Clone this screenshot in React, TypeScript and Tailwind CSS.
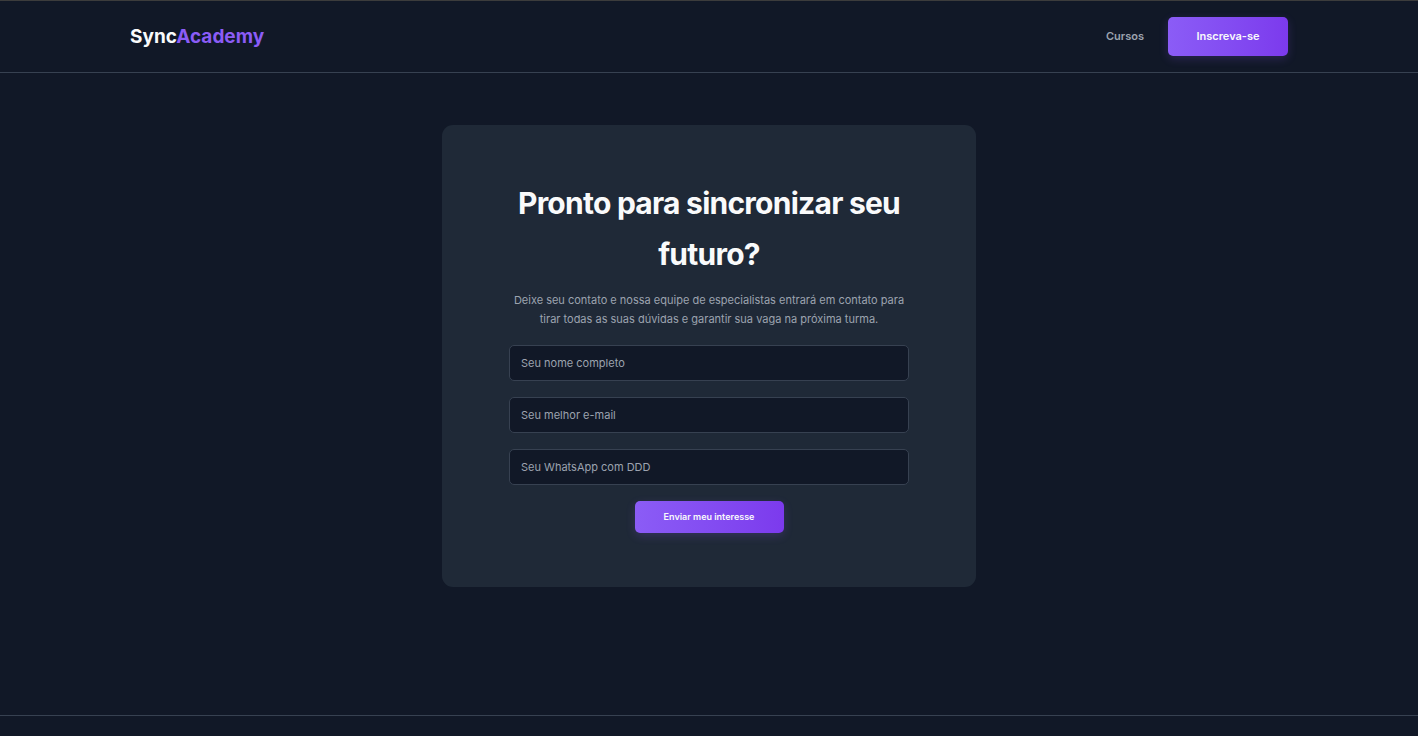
const fields = [
  { id: "nome", type: "text", label: "Seu nome completo" },
  { id: "email", type: "email", label: "Seu melhor e-mail" },
  { id: "whatsapp", type: "tel", label: "Seu WhatsApp com DDD" },
];

function Header() {
  return (
    <header className="border-y border-t-[#3c3c3c] border-b-[#374151]">
      <div className="mx-auto flex h-[71px] max-w-[1158px] items-center justify-between">
        <a href="#inicio" className="text-[19px] leading-7 font-bold text-[#f9fafb]">
          Sync<span className="text-[#8b5cf6]">Academy</span>
        </a>
        <nav className="flex items-center gap-6">
          <a href="#cursos" className="text-[11px] font-semibold text-[#9ca3af]">
            Cursos
          </a>
          <a
            href="#contato"
            className="flex h-[39px] w-[120px] items-center justify-center rounded-[5px] bg-linear-to-r from-[#8b5cf6] to-[#7c3aed] text-[11px] font-semibold text-[#f9fafb] shadow-[0_3px_10px_rgba(139,92,246,0.2)]"
          >
            Inscreva-se
          </a>
        </nav>
      </div>
    </header>
  );
}

function ContactCard() {
  return (
    <section
      id="contato"
      className="w-full max-w-[534px] rounded-[11px] bg-[#1f2937] px-[67px] py-[53px] text-center"
    >
      <h1 className="text-3xl leading-[51px] font-bold tracking-tight text-[#f9fafb]">
        Pronto para sincronizar seu futuro?
      </h1>
      <p className="mt-[11px] text-[11px] leading-[19px] text-[#9ca3af]">
        Deixe seu contato e nossa equipe de especialistas entrará em contato para tirar todas as
        suas dúvidas e garantir sua vaga na próxima turma.
      </p>
      <form className="mt-4 flex flex-col items-center gap-4">
        {fields.map((field) => (
          <input
            key={field.id}
            id={field.id}
            name={field.id}
            type={field.type}
            aria-label={field.label}
            placeholder={field.label}
            className="h-9 w-full rounded-[5px] border border-[#374151] bg-[#111827] px-[11px] text-[11px] text-[#f9fafb] placeholder:text-[#9ca3af]"
          />
        ))}
        <button
          type="submit"
          className="h-8 w-[149px] rounded-[5px] bg-linear-to-r from-[#8b5cf6] to-[#7c3aed] text-[9px] font-semibold text-[#f9fafb] shadow-[0_3px_10px_rgba(139,92,246,0.2)]"
        >
          Enviar meu interesse
        </button>
      </form>
    </section>
  );
}

export default function App() {
  return (
    <div className="flex min-h-screen flex-col bg-[#111827] font-['Inter',sans-serif]">
      <Header />
      <main className="flex grow justify-center pt-[52px] pb-32">
        <ContactCard />
      </main>
      <footer className="h-[21px] border-t border-[#374151]" />
    </div>
  );
}
